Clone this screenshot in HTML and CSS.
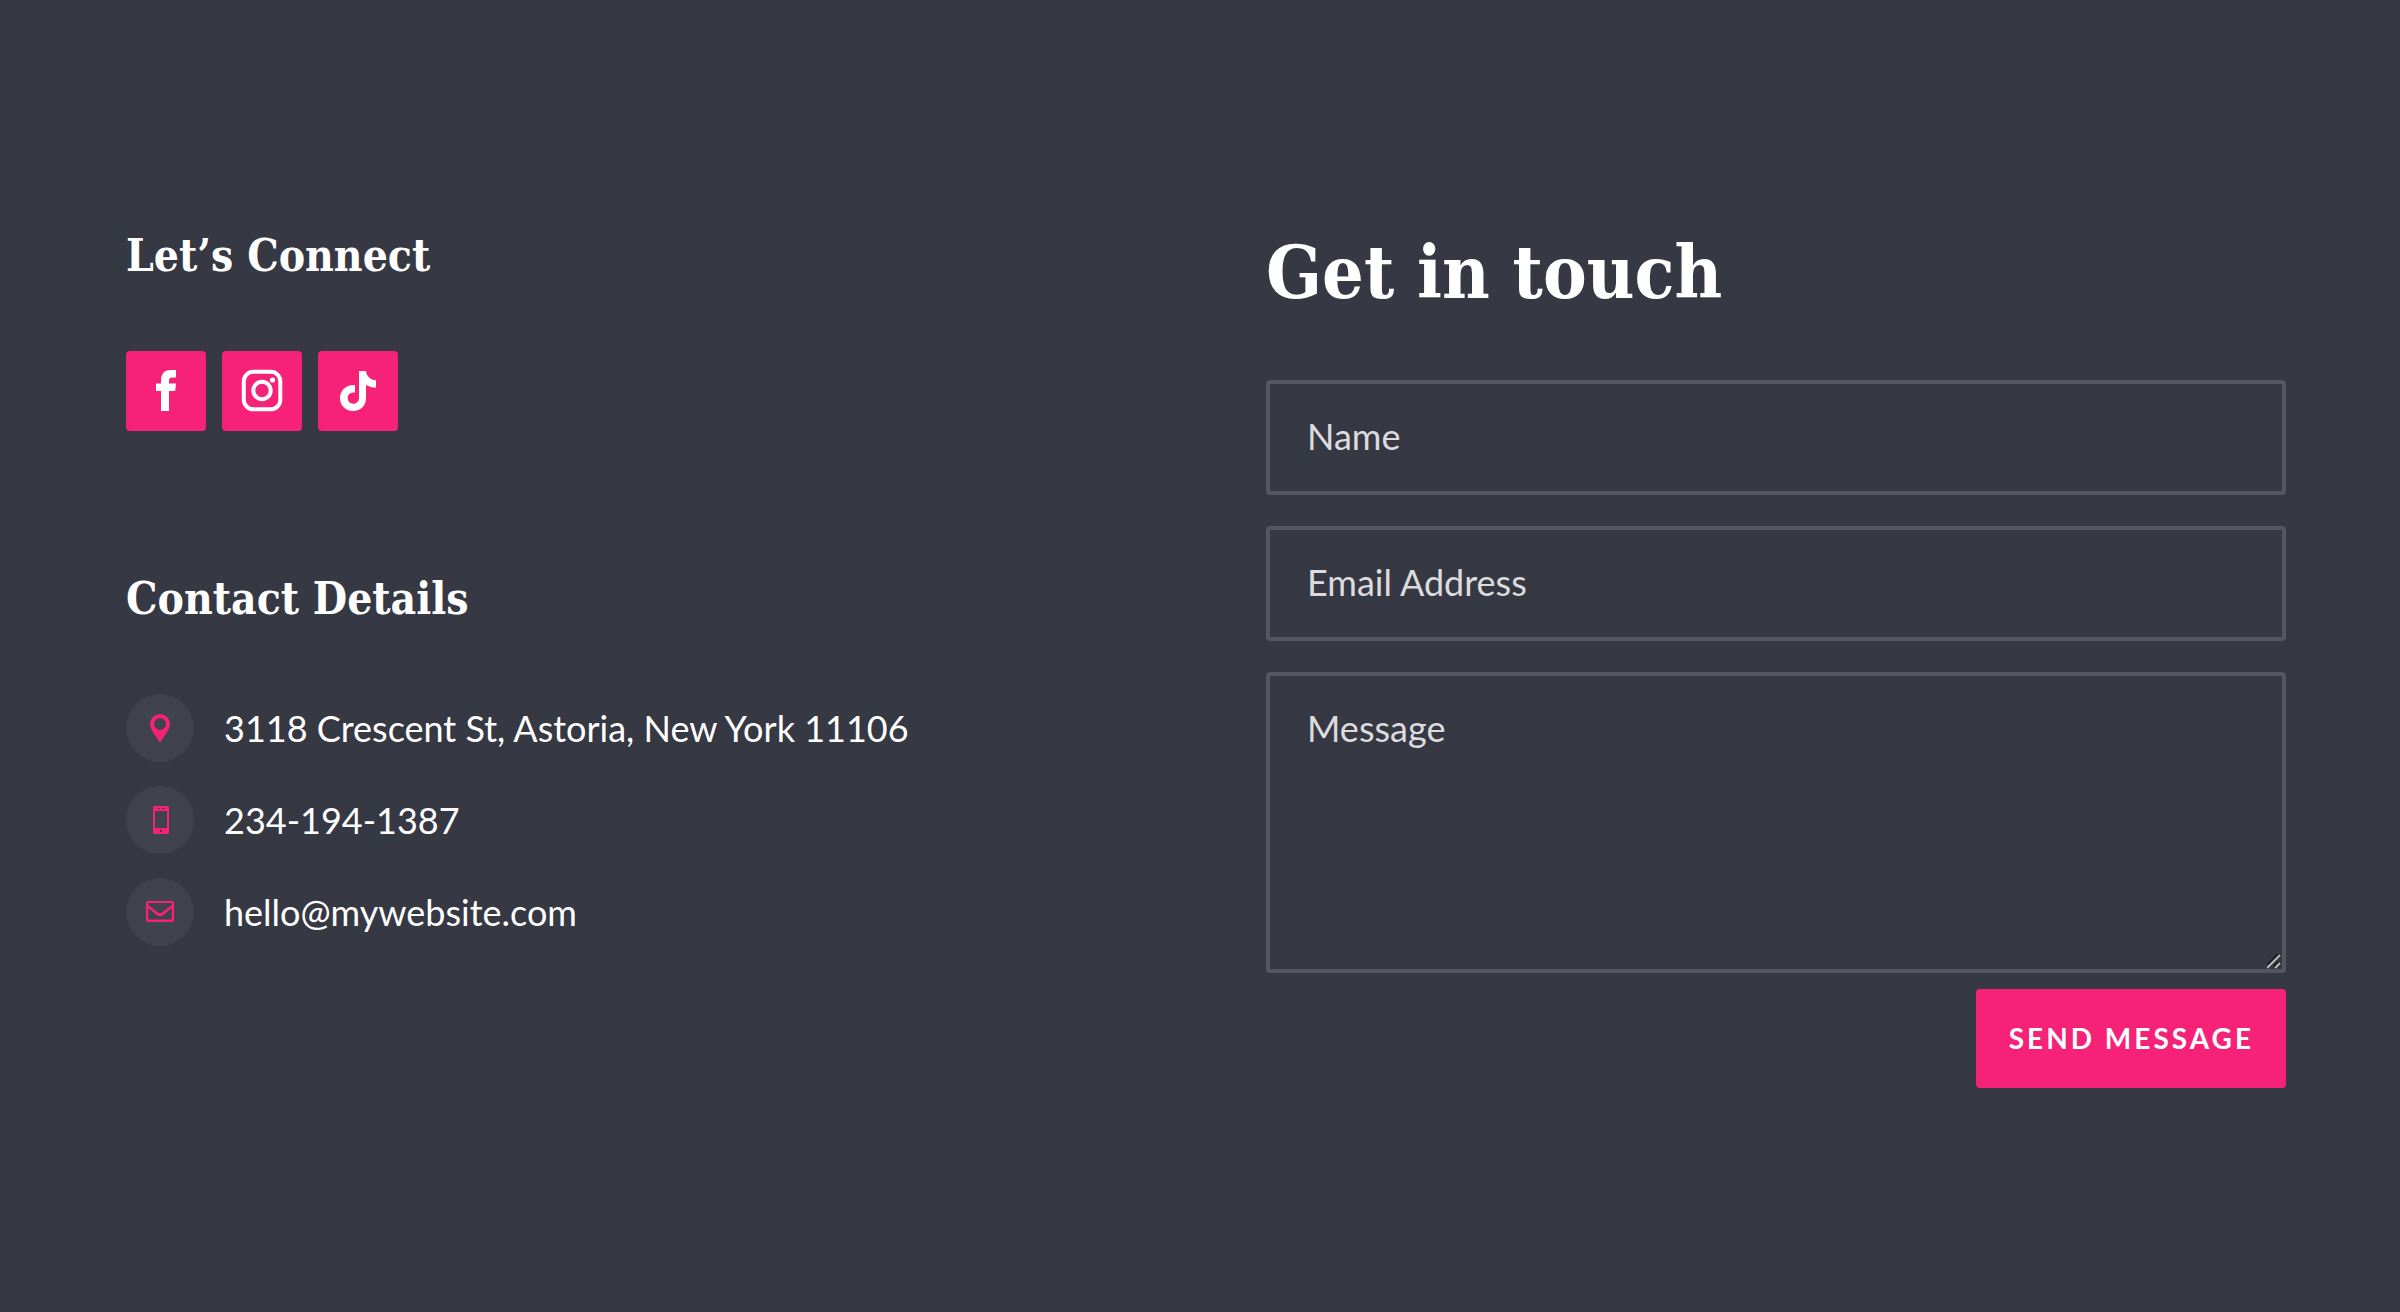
FILE: index.html
```html
<!DOCTYPE html>
<html lang="en">
<head>
<meta charset="utf-8">
<meta name="viewport" content="width=device-width, initial-scale=1">
<title>Get in touch</title>
<link rel="stylesheet" href="styles.css">
</head>
<body>
<main class="contact">
  <section class="info">
    <h2 class="subtitle">Let’s Connect</h2>
    <ul class="socials">
      <li><a class="social" href="#" aria-label="Facebook">
        <svg viewBox="0 0 80 80" aria-hidden="true"><path d="M35 60V40h-5v-7.500h5v-3c0-6.500 3.500-10.500 9.500-10.500H50v7.500h-4c-2 0-3 1-3 3v3h7l-.8 7.500H43v20z"/></svg>
      </a></li>
      <li><a class="social" href="#" aria-label="Instagram">
        <svg viewBox="0 0 80 80" aria-hidden="true"><rect class="stroke" x="21.800" y="20.800" width="36.500" height="37.500" rx="9.500"/><circle class="stroke" cx="40" cy="39.500" r="8.700"/><circle cx="50.500" cy="29" r="2.600"/></svg>
      </a></li>
      <li><a class="social" href="#" aria-label="TikTok">
        <svg viewBox="0 0 80 80" aria-hidden="true"><path d="M41 20h7c.4 5 4.500 9 10 9.300v7.500c-3.700-.1-7-1.200-10-3V47c0 8-5.500 13-13 13s-13-5.500-13-13 6-13.500 15-13v7.500c-4.500-.6-7.300 1.800-7.300 5.500 0 3.300 2.300 5.700 5.500 5.700 3.500 0 5.800-2.400 5.800-6z"/></svg>
      </a></li>
    </ul>
    <h2 class="subtitle">Contact Details</h2>
    <ul class="details">
      <li class="detail">
        <span class="badge"><svg viewBox="0 0 68 68" aria-hidden="true"><path fill-rule="evenodd" d="M34 48.500C31 44 24 35.500 24 30a10 10 0 0 1 20 0c0 5.500-7 14-10 18.500zM34 24a6 6 0 1 0 0 12 6 6 0 0 0 0-12z"/></svg></span>
        <span>3118 Crescent St, Astoria, New York 11106</span>
      </li>
      <li class="detail">
        <span class="badge"><svg viewBox="0 0 68 68" aria-hidden="true"><path fill-rule="evenodd" d="M28.500 20h13a1.500 1.500 0 0 1 1.500 1.500v25a1.500 1.500 0 0 1-1.500 1.500h-13a1.500 1.500 0 0 1-1.500-1.500v-25a1.500 1.500 0 0 1 1.500-1.500zM29 25v17h12V25zM32 22v1h2v-1zM36 22v1h3v-1zM34 44v2h2v-2z"/></svg></span>
        <span>234-194-1387</span>
      </li>
      <li class="detail">
        <span class="badge"><svg viewBox="0 0 68 68" aria-hidden="true"><path fill-rule="evenodd" d="M22 23h24a2 2 0 0 1 2 2v17a2 2 0 0 1-2 2H22a2 2 0 0 1-2-2V25a2 2 0 0 1 2-2zM22.300 25v2l9.700 7.500c1.300 1 2.700 1 4 0l9.700-7.500v-2zM22.300 30v11.500h23.400V30l-8.200 7c-2.200 1.900-4.800 1.900-7 0z"/></svg></span>
        <span>hello@mywebsite.com</span>
      </li>
    </ul>
  </section>
  <section class="reach">
    <h1 class="title">Get in touch</h1>
    <form class="form">
      <input class="field" type="text" placeholder="Name" aria-label="Name">
      <input class="field" type="email" placeholder="Email Address" aria-label="Email Address">
      <textarea class="field message" placeholder="Message" aria-label="Message"></textarea>
      <button class="send" type="submit">SEND MESSAGE</button>
    </form>
  </section>
</main>
</body>
</html>
```
FILE: styles.css
```css
:root {
  --bg: #363843;
  --line: #545661;
  --badge: #40424d;
  --pink: #f62278;
  --serif: "DejaVu Serif Condensed", "DejaVu Serif", serif;
  --sans: Lato, "Open Sans", sans-serif;
}

* {
  box-sizing: border-box;
}

body {
  margin: 0;
  background: var(--bg);
  color: #fff;
  font-family: var(--sans);
  font-size: 36px;
  line-height: 68px;
}

.contact {
  display: grid;
  grid-template-columns: 1fr 1fr;
  gap: 120px;
  padding: 224px 114px 200px 126px;
}

.subtitle,
.title {
  margin: 0;
  font-family: var(--serif);
  font-weight: 700;
  font-stretch: condensed;
}

.subtitle {
  font-size: 44px;
  line-height: 64px;
}

.title {
  font-size: 73px;
  line-height: 96px;
}

.socials,
.details {
  display: flex;
  margin: 0;
  padding: 0;
  list-style: none;
}

.socials {
  gap: 16px;
  margin: 63px 0 136px;
}

.social {
  display: block;
  width: 80px;
  height: 80px;
  border-radius: 4px;
  background: var(--pink);
}

.social svg,
.badge svg {
  display: block;
  width: 100%;
  height: 100%;
}

.social svg {
  fill: #fff;
}

.social .stroke {
  fill: none;
  stroke: #fff;
  stroke-width: 4;
}

.details {
  flex-direction: column;
  gap: 24px;
  margin-top: 63px;
}

.detail {
  display: flex;
  gap: 30px;
}

.badge {
  flex: none;
  width: 68px;
  height: 68px;
  border-radius: 50%;
  background: var(--badge);
}

.badge svg {
  fill: var(--pink);
}

.form {
  display: flex;
  flex-direction: column;
  gap: 31px;
  margin-top: 60px;
}

.field {
  display: block;
  width: 100%;
  height: 115px;
  padding: 30px 37px 34px;
  border: 4px solid var(--line);
  border-radius: 4px;
  outline: 0;
  background: transparent;
  color: #dcdcde;
  font-family: var(--sans);
  font-size: 36px;
  font-weight: 400;
  line-height: 44px;
}

.field::placeholder {
  color: #dcdcde;
  opacity: 1;
}

.message {
  height: 301px;
  resize: vertical;
}

.message::-webkit-scrollbar {
  width: 20px;
}

.message::-webkit-resizer {
  background: url("data:image/svg+xml,%3Csvg xmlns='http://www.w3.org/2000/svg' width='20' height='20'%3E%3Cpath d='M4 18 17 5M12 18l5-5' stroke='%23191a20' stroke-width='3'/%3E%3Cpath d='M5 19 18 6M13 19l5-5' stroke='%23bbb' stroke-width='2'/%3E%3C/svg%3E") no-repeat right bottom;
}

.send {
  align-self: flex-end;
  margin-top: -15px;
  padding: 0 32px 0 33px;
  border: 0;
  border-radius: 4px;
  background: var(--pink);
  color: #fff;
  font-family: var(--sans);
  font-size: 28px;
  font-weight: 700;
  line-height: 99px;
  letter-spacing: 3px;
}

@media (max-width: 1200px) {
  .contact {
    grid-template-columns: 1fr;
    padding: 80px 40px;
  }
}
```
